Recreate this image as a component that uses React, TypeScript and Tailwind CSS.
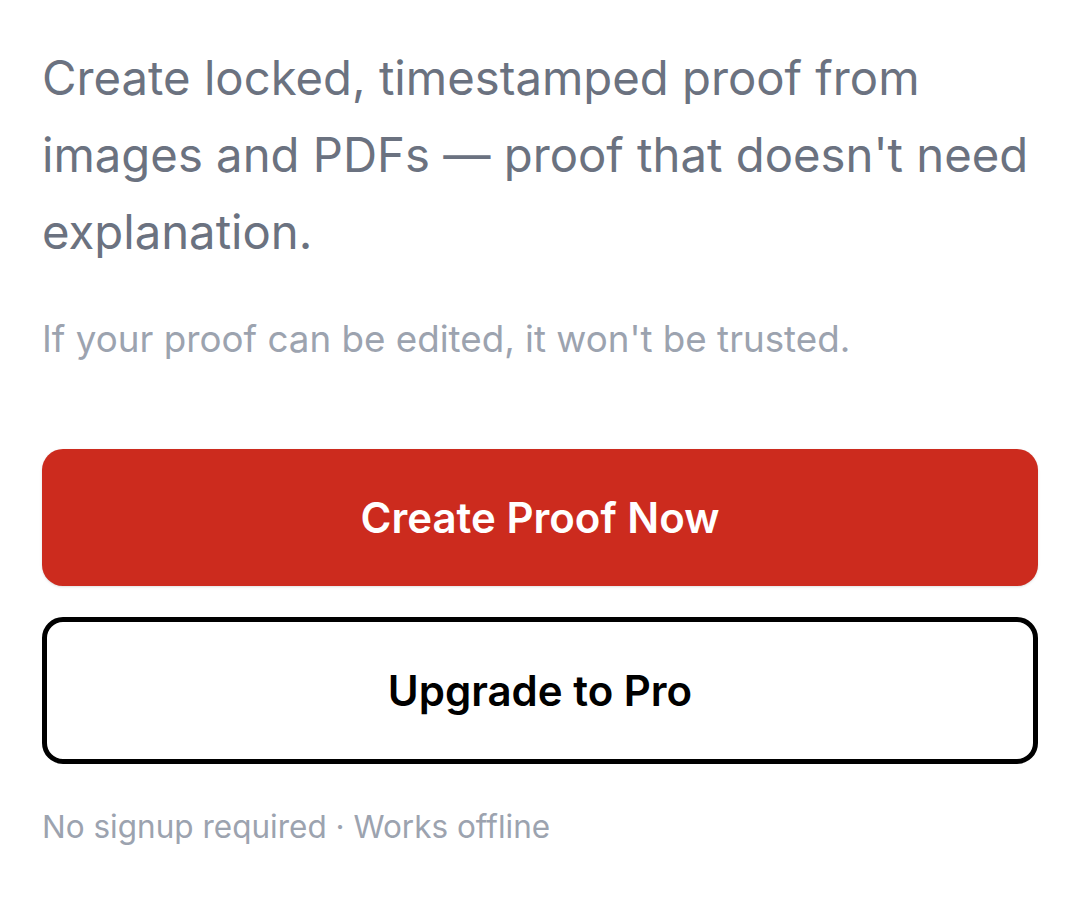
export default function App() {
  return (
    <div
      className="min-h-screen bg-white px-[42px] pt-[40px]"
      style={{ fontFamily: 'Inter, "Noto Sans", sans-serif' }}
    >
      <p className="text-[47.25px] leading-[76.78px] text-[#6b7280]">
        Create locked, timestamped proof from images and PDFs — proof that doesn't need explanation.
      </p>
      <p className="mt-[39px] text-[36.75px] leading-[59.72px] text-[#9ca3af]">
        If your proof can be edited, it won't be trusted.
      </p>
      <div className="mt-[80px] flex flex-col gap-[31.5px]">
        <button
          type="button"
          className="w-full rounded-[21px] bg-[#cc2b1e] py-[36.75px] text-[42px] font-semibold leading-[63px] text-white shadow-sm"
        >
          Create Proof Now
        </button>
        <button
          type="button"
          className="w-full rounded-[21px] border-[5.25px] border-black bg-white py-[36.75px] text-[42px] font-semibold leading-[63px] text-black"
        >
          Upgrade to Pro
        </button>
      </div>
      <p className="mt-[39px] text-[31.5px] leading-[47.25px] text-[#9ca3af]">
        No signup required · Works offline
      </p>
    </div>
  );
}
